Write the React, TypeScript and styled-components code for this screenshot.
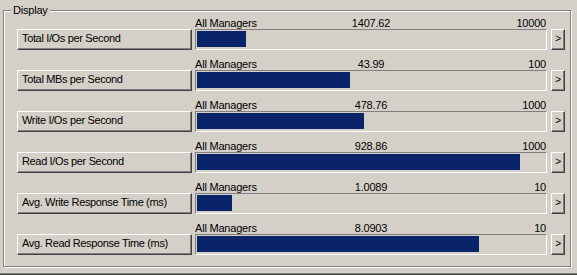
import React from 'react';
import styled, { createGlobalStyle } from 'styled-components';

const GlobalStyle = createGlobalStyle`
  html, body {
    margin: 0;
    padding: 0;
    background: #d4d0c8;
  }
`;

const Window = styled.div`
  box-sizing: border-box;
  width: 577px;
  height: 275px;
  padding: 10px 0 0 3px;
  background: #d4d0c8;
  box-shadow: inset 0 -1px 0 #404040, inset 0 -2px 0 #808080;
  font-family: 'Liberation Sans', Arial, sans-serif;
  font-size: 11px;
  letter-spacing: -0.2px;
  color: #000;
`;

const GroupBox = styled.div`
  position: relative;
  box-sizing: border-box;
  width: 568px;
  height: 257px;
  border: 1px solid #808080;
  box-shadow: 1px 1px 0 #fff, inset 1px 1px 0 #fff;
  padding: 6px 0 0 13px;
  display: flex;
  flex-direction: column;
  gap: 8px;
`;

const Legend = styled.span`
  position: absolute;
  top: -7px;
  left: 7px;
  padding: 0 2px;
  line-height: 12px;
  background: #d4d0c8;
`;

const Row = styled.div`
  display: grid;
  grid-template-columns: 175px 352px 15px;
  grid-template-rows: 12px 21px;
  column-gap: 3px;
`;

const Captions = styled.div`
  grid-column: 2;
  grid-row: 1;
  display: grid;
  grid-template-columns: 1fr auto 1fr;
  line-height: 12px;
  white-space: nowrap;
`;

const Caption = styled.span<{ $align: 'start' | 'center' | 'end' }>`
  justify-self: ${p => p.$align};
  padding-right: ${p => (p.$align === 'end' ? '1px' : '0')};
`;

const MetricButton = styled.div`
  grid-column: 1;
  grid-row: 2;
  box-sizing: border-box;
  display: flex;
  align-items: center;
  padding: 0 0 2px 4px;
  border: 1px solid;
  border-color: #fff #404040 #404040 #fff;
  box-shadow: inset -1px -1px 0 #808080;
  line-height: 17px;
  letter-spacing: -0.35px;
  white-space: nowrap;
`;

const Bar = styled.div`
  grid-column: 2;
  grid-row: 2;
  box-sizing: border-box;
  padding: 1px 1px 2px 1px;
  border: 1px solid;
  border-color: #808080 #fff #fff #808080;
`;

const Fill = styled.div`
  height: 100%;
  background: #0a246a;
`;

const MoreButton = styled.div`
  grid-column: 3;
  grid-row: 2;
  margin-left: 1px;
  box-sizing: border-box;
  display: flex;
  align-items: center;
  justify-content: center;
  padding-bottom: 1px;
  border: 1px solid;
  border-color: #fff #404040 #404040 #fff;
  box-shadow: inset -1px -1px 0 #808080;
  font-size: 10px;
  line-height: 10px;
`;

const metrics = [
  { name: 'Total I/Os per Second', value: '1407.62', max: 10000 },
  { name: 'Total MBs per Second', value: '43.99', max: 100 },
  { name: 'Write I/Os per Second', value: '478.76', max: 1000 },
  { name: 'Read I/Os per Second', value: '928.86', max: 1000 },
  { name: 'Avg. Write Response Time (ms)', value: '1.0089', max: 10 },
  { name: 'Avg. Read Response Time (ms)', value: '8.0903', max: 10 },
];

export default function App() {
  return (
    <>
      <GlobalStyle />
      <Window>
        <GroupBox>
          <Legend>Display</Legend>
          {metrics.map(m => (
            <Row key={m.name}>
              <Captions>
                <Caption $align='start'>All Managers</Caption>
                <Caption $align='center'>{m.value}</Caption>
                <Caption $align='end'>{m.max}</Caption>
              </Captions>
              <MetricButton>{m.name}</MetricButton>
              <Bar>
                <Fill style={{ width: `${(parseFloat(m.value) / m.max) * 100}%` }} />
              </Bar>
              <MoreButton>&gt;</MoreButton>
            </Row>
          ))}
        </GroupBox>
      </Window>
    </>
  );
}
